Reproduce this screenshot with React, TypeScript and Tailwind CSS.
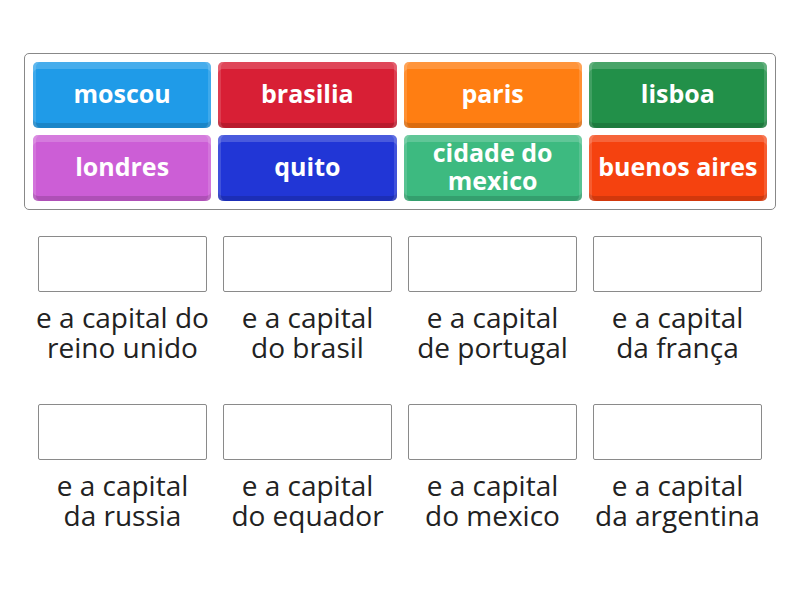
const tiles = [
  { label: "moscou", bg: "bg-[#1f9be8]" },
  { label: "brasilia", bg: "bg-[#d81f35]" },
  { label: "paris", bg: "bg-[#ff7e12]" },
  { label: "lisboa", bg: "bg-[#229049]" },
  { label: "londres", bg: "bg-[#cc5ed6]" },
  { label: "quito", bg: "bg-[#2136d6]" },
  { label: "cidade do mexico", bg: "bg-[#3dba80]" },
  { label: "buenos aires", bg: "bg-[#f5420f]" },
];

const targets = [
  ["e a capital do", "reino unido"],
  ["e a capital", "do brasil"],
  ["e a capital", "de portugal"],
  ["e a capital", "da frança"],
  ["e a capital", "da russia"],
  ["e a capital", "do equador"],
  ["e a capital", "do mexico"],
  ["e a capital", "da argentina"],
];

const tileShade =
  "shadow-[inset_0_7px_0_rgba(255,255,255,0.18),inset_3px_0_0_rgba(255,255,255,0.14),inset_-3px_0_0_rgba(255,255,255,0.14),inset_0_-5px_0_rgba(0,0,0,0.14)]";

export default function App() {
  return (
    <div className="h-[600px] w-[800px] bg-white pt-[53px] font-['Open_Sans',sans-serif]">
      <div className="mx-[24px] rounded-[5px] border border-[#888] p-[8px]">
        <div className="grid grid-cols-4 gap-[7px]">
          {tiles.map((t) => (
            <div
              key={t.label}
              className={`flex h-[66px] items-center justify-center rounded-[5px] px-1 pb-[5px] text-center text-[25px] font-bold leading-[28px] text-white ${t.bg} ${tileShade}`}
            >
              <span className={t.label === "cidade do mexico" ? "block w-[140px]" : ""}>
                {t.label}
              </span>
            </div>
          ))}
        </div>
      </div>

      <div className="mx-[30px] mt-[26px] grid grid-cols-4 gap-y-[42px]">
        {targets.map(([a, b]) => (
          <div key={a + b} className="flex flex-col items-center">
            <div className="h-[56px] w-[169px] rounded-[2px] border border-[#8a8a8a] bg-white" />
            <div className="mt-[10px] whitespace-nowrap text-center text-[28px] leading-[30px] text-[#222]">
              <div>{a}</div>
              <div>{b}</div>
            </div>
          </div>
        ))}
      </div>
    </div>
  );
}
